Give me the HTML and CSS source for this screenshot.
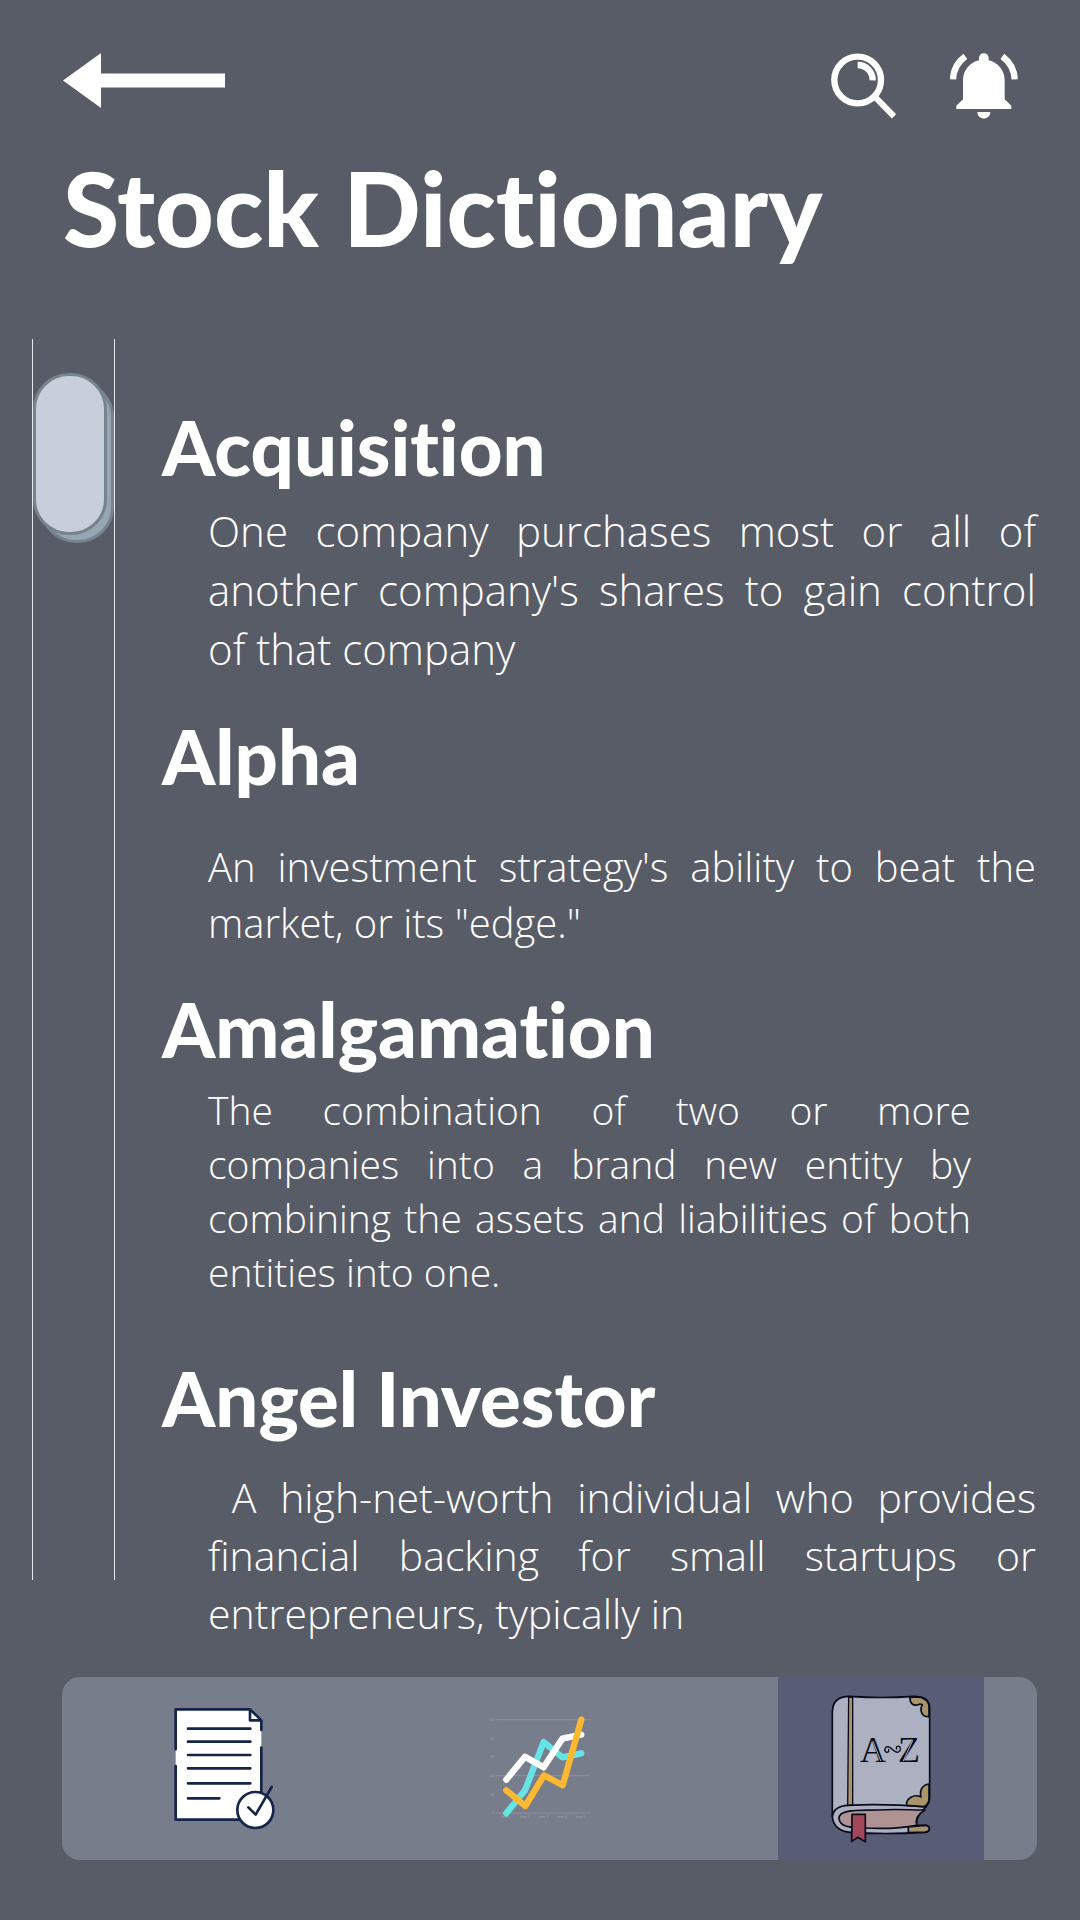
FILE: index.html
```html
<!DOCTYPE html>
<html lang="en">
<head>
<meta charset="utf-8">
<meta name="viewport" content="width=device-width, initial-scale=1">
<title>Stock Dictionary</title>
<link rel="stylesheet" href="styles.css">
</head>
<body>
<div class="app">
  <header class="header">
    <div class="toolbar">
      <button class="icon-button" type="button" aria-label="Back">
        <svg width="162" height="55" viewBox="0 0 162 55" fill="#fff"><path d="M0 27.500 38 0V20.500H162V34.500H38V55Z"/></svg>
      </button>
      <div class="actions">
        <button class="icon-button" type="button" aria-label="Search">
          <svg width="66" height="66" viewBox="62 38 198 198" fill="none" stroke="#fff">
            <circle cx="142" cy="119" r="70" stroke-width="19"/>
            <path d="M142 74A45 45 0 0 1 187 120" stroke-width="19"/>
            <path d="M196 172 251 228" stroke-width="18"/>
          </svg>
        </button>
        <button class="icon-button" type="button" aria-label="Notifications">
          <svg width="68" height="66" viewBox="420 38 204 198" fill="#fff">
            <path d="M507 60V53a14 14 0 0 1 29 0v7C565 67 584 90 584 121V177L604 196V206H439V196L459 177V121C459 90 479 67 507 60Z"/>
            <path d="M502 215H541C541 241 502 241 502 215Z"/>
            <path d="M429 117C430 89 443 65 466 48M614 117C613 89 600 65 577 48" fill="none" stroke="#fff" stroke-width="19"/>
          </svg>
        </button>
      </div>
    </div>
    <h1 class="title">Stock Dictionary</h1>
  </header>

  <main class="content">
    <div class="rail" role="scrollbar" aria-label="Dictionary position" aria-controls="terms" aria-orientation="vertical" aria-valuenow="0" aria-valuemin="0" aria-valuemax="100">
      <div class="thumb"></div>
    </div>
    <dl class="terms" id="terms">
      <div class="entry">
        <dt class="term">Acquisition</dt>
        <dd class="meaning meaning-large">One company purchases most or all of another company's shares to gain control of that company</dd>
      </div>
      <div class="entry entry-spaced">
        <dt class="term">Alpha</dt>
        <dd class="meaning meaning-medium">An investment strategy's ability to beat the market, or its "edge."</dd>
      </div>
      <div class="entry">
        <dt class="term">Amalgamation</dt>
        <dd class="meaning meaning-small">The combination of two or more companies into a brand new entity by combining the assets and liabilities of both entities into one.</dd>
      </div>
      <div class="entry entry-last">
        <dt class="term">Angel Investor</dt>
        <dd class="meaning meaning-regular">&nbsp;A high-net-worth individual who provides financial backing for small startups or entrepreneurs, typically in</dd>
      </div>
    </dl>
  </main>

  <nav class="tabs" aria-label="Main">
    <a class="tab" href="#tasks" aria-label="Tasks">
      <svg width="104" height="125" viewBox="67 47 312 375" fill="none" stroke="#16244a" stroke-width="8" stroke-linecap="round" stroke-linejoin="round">
        <path d="M78 57H301L335 90V388H78Z" fill="#fff" stroke="none"/>
        <path d="M78 177V57H301L335 90V119M335 172V310M78 227V388H270M301 57V90H335"/>
        <path d="M115 115H302M115 154H302M115 194H302M115 234H302M115 279H302M115 324H209"/>
        <circle cx="317" cy="359" r="54" fill="#fff"/>
        <path d="M296 351 318 373 366 290"/>
      </svg>
    </a>
    <a class="tab tab-chart" href="#market" aria-label="Market">
      <svg width="107" height="107" viewBox="50 74 321 321" fill="none" stroke-linecap="round" stroke-linejoin="round">
        <path d="M80 88H360M80 256H360M80 368H360" stroke="#8d91a0" stroke-width="3"/>
        <g class="chart-labels">
          <text x="60" y="92">50</text><text x="60" y="149">40</text><text x="60" y="204">30</text><text x="60" y="260">20</text><text x="60" y="317">10</text><text x="66" y="372">0</text>
          <text x="92" y="384">Item 1</text><text x="148" y="384">Item 2</text><text x="204" y="384">Item 3</text><text x="260" y="384">Item 4</text><text x="316" y="384">Item 5</text>
        </g>
        <g stroke-width="19">
          <path d="M108 369 164 300 220 155 276 201 333 189" stroke="#66e3e4"/>
          <path d="M108 268 164 199 220 231 276 145 333 133" stroke="#fff"/>
          <path d="M108 300 165 347 221 255 277 285 333 88" stroke="#fbb931"/>
        </g>
      </svg>
    </a>
    <a class="tab tab-active" href="#dictionary" aria-label="Dictionary" aria-current="page">
      <svg width="102" height="150" viewBox="180 70 306 450" fill="#adb0c0" stroke="#080b1c" stroke-width="5" stroke-linejoin="round" stroke-linecap="round">
        <path d="M187 437V123C188 92 207 77 238 77Q335 84 430 77C465 77 479 88 479 115V380C479 395 472 406 462 415C448 427 438 440 439 464H466C482 465 482 484 466 485Q340 492 243 485C209 483 188 465 187 437Z"/>
        <path d="M465 418C420 418 380 414 325 418C270 420 207 414 207 443C209 469 240 471 280 472C340 475 400 472 440 464C435 447 445 430 465 418Z" fill="#af9293"/>
        <path d="M187 437C190 418 207 405 235 404Q340 398 467 409" fill="none"/>
        <path d="M236 80H248V403H233Z" fill="#aa956b" stroke-width="4"/>
        <path d="M420 80C419 99 431 107 444 102Q450 99 457 102C448 120 455 139 477 138V109C477 89 460 79 438 79Z" fill="#aa956b"/>
        <path d="M477 340C456 343 448 360 453 379C433 369 407 382 410 404L462 408Q477 401 477 382Z" fill="#aa956b"/>
        <path d="M415 469 465 464C482 465 482 482 466 484L415 486Z" fill="#aa956b"/>
        <path d="M246 431H286V513L263 500 245 512Z" fill="#a14759"/>
        <path d="M344 240C347 220 360 229 370 239C382 251 395 242 390 229M344 240C350 249 358 244 356 237M390 229C384 223 376 229 380 235" fill="none" stroke-width="4"/>
        <g class="book-letters"><text x="270" y="275">A</text><text x="384" y="275">Z</text></g>
        <path d="M309 212 332 270M428 210 400 270" fill="none" stroke="#adb0c0" stroke-width="3"/>
      </svg>
    </a>
  </nav>
</div>
</body>
</html>
```
FILE: styles.css
```css
* {
  box-sizing: border-box;
}

body {
  margin: 0;
  background: #585c67;
  color: #fff;
  font-family: "Open Sans", sans-serif;
}

.app {
  min-height: 100vh;
  display: flex;
  flex-direction: column;
  padding-bottom: 60px;
}

.header {
  padding: 53px 62px 0 63px;
}

.toolbar {
  display: flex;
  justify-content: space-between;
  align-items: flex-start;
}

.actions {
  display: flex;
  gap: 53px;
}

.icon-button {
  display: block;
  padding: 0;
  border: 0;
  background: none;
  cursor: pointer;
}

.icon-button svg,
.tab svg {
  display: block;
}

.title,
.term {
  font-family: "Lato Black", Lato, sans-serif;
  font-weight: 900;
  font-variant-ligatures: none;
}

.title {
  margin: 29px 0 71px;
  font-size: 102px;
  line-height: 120px;
}

.content {
  flex: 1;
  display: flex;
  gap: 47px;
  padding: 0 44px 0 32px;
}

.rail {
  flex: 0 0 83px;
  margin-bottom: 97px;
  padding-top: 34px;
  border: solid #e6e7ea;
  border-width: 0 1px;
}

.thumb {
  width: 74px;
  height: 162px;
  border: 3px solid #77848e;
  border-radius: 36px;
  background: #c8cfda;
  box-shadow: 7px 8px 0 -3px #98a5b2, 7px 8px 0 0 #77848e;
}

.terms {
  flex: 1;
  margin: 0;
  padding: 68px 0 34px;
  display: flex;
  flex-direction: column;
  gap: 38px;
}

.entry {
  display: flex;
  flex-direction: column;
  gap: 14px;
}

.entry-spaced {
  gap: 43px;
}

.entry-last {
  gap: 30px;
  margin-top: 21px;
}

.term {
  font-size: 76px;
  line-height: 80px;
}

.meaning {
  margin: 0 0 0 46px;
  font-weight: 300;
  text-align: justify;
}

.meaning-large {
  font-size: 42px;
  line-height: 59px;
}

.meaning-medium {
  font-size: 40px;
  line-height: 56px;
}

.meaning-small {
  margin-right: 65px;
  font-size: 39px;
  line-height: 54px;
}

.meaning-regular {
  font-size: 41px;
  line-height: 58px;
}

.tabs {
  display: grid;
  grid-template-columns: 324fr 392fr 206fr;
  min-height: 183px;
  margin: 0 43px 0 62px;
  padding-right: 53px;
  border-radius: 18px;
  background: #787d8c;
}

.tab {
  display: flex;
  align-items: center;
  justify-content: center;
}

.tab-chart {
  padding-right: 84px;
}

.tab-active {
  background: #595c75;
}

.chart-labels {
  fill: #a6a9b4;
  font: 10px "Open Sans", sans-serif;
}

.book-letters {
  fill: #080b1c;
  stroke: none;
  font: 108px "Liberation Serif", serif;
}
```
